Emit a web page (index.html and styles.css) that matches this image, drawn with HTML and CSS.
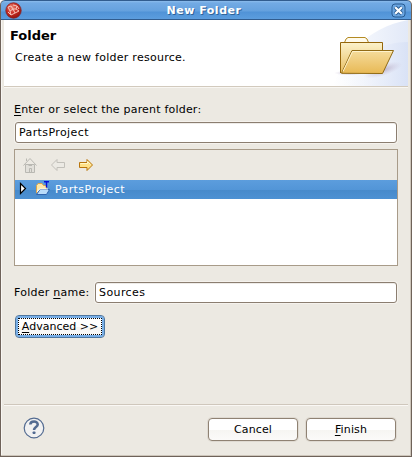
FILE: index.html
```
<!DOCTYPE html>
<html lang="en">
<head>
<meta charset="utf-8">
<title>New Folder</title>
<link rel="stylesheet" href="styles.css">
</head>
<body>
<div class="window">
  <header class="titlebar">
    <svg class="app-icon" width="17" height="17" viewBox="0 0 17 17">
      <defs><radialGradient id="red" cx=".4" cy=".3" r=".7"><stop offset="0" stop-color="#ed8b78"/><stop offset=".5" stop-color="#cc3027"/><stop offset="1" stop-color="#98150f"/></radialGradient></defs>
      <circle cx="8.5" cy="8.5" r="7.7" fill="url(#red)" stroke="#86211f" stroke-width=".8"/>
      <path d="M3 5l3-1 2 3-3 2zM8 3l4 1-1 3-3 0M5 9l1 4 4-2M8 7l2 4 4-2-3-2M3 10l3 3M12 4l2 3" fill="none" stroke="#f6c4b8" stroke-width="1"/>
    </svg>
    <h1 class="title">New Folder</h1>
    <svg class="close" width="15" height="15" viewBox="0 0 15 15">
      <rect x="1" y="1" width="13" height="13" rx="3" fill="#6aa5e0" stroke="#285a91"/>
      <path d="M4.2 4.2l6.6 6.6M10.8 4.2l-6.6 6.6" stroke="#285a91" stroke-width="4"/>
      <path d="M4.2 4.2l6.6 6.6M10.8 4.2l-6.6 6.6" stroke="#fff" stroke-width="2.2"/>
    </svg>
  </header>
  <section class="banner">
    <div class="banner-text">
      <h2 class="heading">Folder</h2>
      <p class="description">Create a new folder resource.</p>
    </div>
    <svg class="banner-art" width="75" height="66" viewBox="333 20 75 66">
      <defs>
        <linearGradient id="sweep" x1="0" x2="1"><stop offset="0" stop-color="#fff"/><stop offset="1" stop-color="#e2e9f8"/></linearGradient>
        <linearGradient id="sweep2" x1="0" x2="1"><stop offset="0" stop-color="#fff" stop-opacity="0"/><stop offset="1" stop-color="#d9e2f6"/></linearGradient>
        <linearGradient id="back" x1="0" y1="0" x2="0" y2="1"><stop offset="0" stop-color="#fcf2cb"/><stop offset="1" stop-color="#e8bf64"/></linearGradient>
        <linearGradient id="front" x1="0" y1="0" x2="0" y2="1"><stop offset="0" stop-color="#f5dc9c"/><stop offset="1" stop-color="#e8b955"/></linearGradient>
        <radialGradient id="shadow"><stop offset="0" stop-color="#a99ab5" stop-opacity=".7"/><stop offset="1" stop-color="#c8bed5" stop-opacity="0"/></radialGradient>
      </defs>
      <path d="M333 86C345 54 367 28 408 20V86Z" fill="url(#sweep)"/>
      <path d="M333 86C350 61 377 42 408 42V86Z" fill="url(#sweep2)"/>
      <ellipse cx="383" cy="70" rx="20" ry="6" fill="url(#shadow)" transform="rotate(-18 383 70)"/>
      <ellipse cx="349" cy="73" rx="15" ry="2.5" fill="url(#shadow)"/>
      <path d="M344.500 42.500L346 39L348 37.500H365L367 39L368.500 42.500" fill="#fffbed" stroke="#b48a22"/>
      <path d="M340.500 73V42.500H382.500V72" fill="url(#back)" stroke="#95660b"/>
      <path d="M341.500 73.300L352 50.500H393.500L382.500 73.500Z" fill="url(#front)" stroke="#916b15"/>
      <path d="M343 71.500L352.600 51.500H392" fill="none" stroke="#fff3cc"/>
    </svg>
  </section>
  <main class="content">
    <label class="label"><u>E</u>nter or select the parent folder:</label>
    <div class="field">PartsProject</div>
    <div class="tree">
      <div class="tools">
        <svg width="80" height="18" viewBox="20 156 80 18">
          <g fill="#e2e0da" stroke="#b9b8b2"><path d="M25.500 164.500H34.500V172.500H25.500Z"/><path d="M23.500 165.500L30 158.500L36.500 165.500M26.500 161V158.500" fill="none"/><path d="M29.500 172V168.500H31.500V172M28.500 165.500H32" fill="none"/></g>
          <path d="M51.500 165L57 159.500V162.500H64.500V167.500H57V170.500Z" fill="#eceae4" stroke="#c2c0ba"/>
          <path d="M92.500 165L87 159.500V162.500H79.500V167.500H87V170.500Z" fill="#ffe28a" stroke="#b8750d"/>
          <path d="M80.500 163.500H87.500V161.500L90.500 164.500" fill="none" stroke="#fff8c9"/>
        </svg>
      </div>
      <div class="row">
        <svg width="40" height="18" viewBox="15 180 40 18">
          <path d="M20.500 183.500L25.500 188.500L20.500 193.500Z" fill="#fff" stroke="#000" stroke-width="1.200"/>
          <path d="M36.500 193V185.500L38 183.500H42L43.500 185.500H46.500V192Z" fill="#ffe9aa" stroke="#dda449"/>
          <path d="M36.500 194.500L40 189.500H49.500L46.500 194.500Z" fill="#b9dcfa" stroke="#2f64ae"/>
          <path d="M37 192L39.500 189H48" fill="none" stroke="#f5faff"/>
          <path d="M44 181.800H49M46.500 182V187.500" fill="none" stroke="#0710d7" stroke-width="1.400"/>
        </svg>
        <span class="row-text">PartsProject</span>
      </div>
    </div>
    <div class="name-line">
      <label class="name-label">Folder <u>n</u>ame:</label>
      <div class="field name-field">Sources</div>
    </div>
    <button class="button advanced"><span class="focus"><u>A</u>dvanced &gt;&gt;</span></button>
  </main>
  <footer class="footer">
    <svg class="help" width="22" height="22" viewBox="0 0 22 22">
      <circle cx="11" cy="11" r="9.800" fill="#f1f1f1" stroke="#536b91" stroke-width="1.200"/>
      <path d="M7.300 7.500C7.500 3.600 14.700 3.500 14.700 7.400C14.700 10 11 9.900 11 13" fill="none" stroke="#536b91" stroke-width="2.600"/>
      <rect x="9.600" y="14.400" width="2.900" height="2.700" rx=".8" fill="#536b91"/>
    </svg>
    <button class="button">Cancel</button>
    <button class="button"><u>F</u>inish</button>
  </footer>
</div>
</body>
</html>
```
FILE: styles.css
```
* { box-sizing: border-box; }
body {
  margin: 0;
  background: #fff;
  font: 11px/14px "DejaVu Sans", sans-serif;
  color: #000;
}
h1, h2, p { margin: 0; }
u { text-decoration-thickness: 1px; text-underline-offset: 2px; text-decoration-skip-ink: none; }
.window {
  width: 412px;
  height: 457px;
  background: #ece9e2;
  border: 1px solid #6e6259;
  border-top: 0;
  border-radius: 5px 5px 0 0;
  box-shadow: inset -1px -1px #cdc5ba, inset 1px 0 #f8f6f2;
  overflow: hidden;
}
.titlebar {
  height: 20px;
  margin: 0 -1px;
  padding: 1px 4px 0 4px;
  display: flex;
  align-items: center;
  justify-content: space-between;
  border: 1px solid #315c8e;
  border-radius: 5px 5px 0 0;
  background: linear-gradient(#8bbcec 0, #72aae4 2px, #65a1de 10px, #5093d7 11px, #5c9dde 100%);
}
.app-icon { flex: none; margin-top: -1px; }
.title {
  margin-right: 5px;
  font-size: 11px;
  line-height: 16px;
  color: #fff;
  letter-spacing: .5px;
  text-shadow: 1px 1px #2f6297;
}
.close { flex: none; margin-right: 1px; }
.banner {
  height: 68px;
  margin: 0 3px;
  display: flex;
  justify-content: space-between;
  background: #fff;
  border-bottom: 1px solid #f8f6f2;
  box-shadow: inset 0 -1px #d2cabd;
}
.banner-text { padding: 8px 0 0 6px; }
.heading { font-size: 13px; line-height: 16px; }
.description { margin: 7px 0 0 5px; letter-spacing: .27px; }
.banner-art { flex: none; }
.content {
  height: 316px;
  padding: 15px 14px 0 13px;
}
.label { display: block; height: 19px; letter-spacing: .2px; }
.field {
  height: 21px;
  margin-left: 1px;
  padding: 3px;
  border: 1px solid #8b7e70;
  border-radius: 3px;
  background: #fff;
  box-shadow: 0 0 0 1px #f5f2ed, inset 0 1px #eeece9;
  letter-spacing: .4px;
}
.tree {
  height: 117px;
  margin: 6px -1px 0 0;
  border: 1px solid #a89b89;
  background: #fff;
}
.tools { height: 30px; padding: 6px 0 0 5px; background: #ece9e2; }
.row {
  height: 19px;
  display: flex;
  color: #fff;
  line-height: 20px;
  letter-spacing: .4px;
  background: linear-gradient(#5c9ddd 0, #5295d7 10px, #478acb 10px, #4d91d3 100%);
}
.name-line { display: flex; align-items: center; margin-top: 16px; }
.name-label { width: 80px; white-space: nowrap; letter-spacing: .25px; }
.name-field { flex: 1; }
.button {
  width: 90px;
  height: 23px;
  padding: 0;
  font: inherit;
  color: #000;
  letter-spacing: .15px;
  border: 1px solid #8f8273;
  border-radius: 4px;
  background: linear-gradient(#fff 0, #fff 50%, #f6f5f2 51%, #fbfaf9 100%);
  box-shadow: 0 0 0 1px #dfdad2;
}
.advanced {
  display: block;
  margin: 12px 0 0 1px;
  padding: 2px;
  letter-spacing: 0;
  border-color: #50779f;
  box-shadow: inset 0 0 0 2px #78afe8;
}
.focus { display: block; height: 17px; line-height: 15px; border: 1px dotted #000; }
.footer {
  height: 52px;
  margin: 0 3px;
  padding: 13px 12px 0 19px;
  display: flex;
  gap: 8px;
  border-top: 1px solid #cfc7bc;
  box-shadow: inset 0 1px #faf8f5;
}
.help { margin-right: auto; margin-top: -1px; }
```
